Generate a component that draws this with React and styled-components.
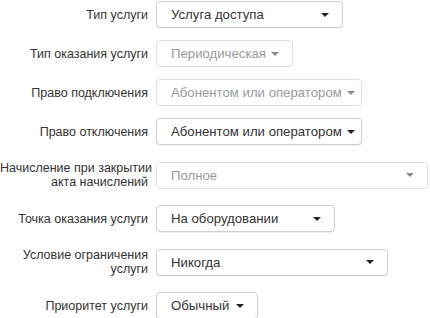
import React from 'react';
import styled, { createGlobalStyle } from 'styled-components';

const GlobalStyle = createGlobalStyle`
  body {
    margin: 0;
    background: #fff;
    font-family: "Liberation Sans", Arial, sans-serif;
    color: #333;
  }
`;

const rows = [
  { label: 'Тип услуги', value: 'Услуга доступа', width: 187, top: 1 },
  { label: 'Тип оказания услуги', value: 'Периодическая', width: 137, top: 12, disabled: true },
  { label: 'Право подключения', value: 'Абонентом или оператором', width: 206, top: 12, disabled: true },
  { label: 'Право отключения', value: 'Абонентом или оператором', width: 206, top: 12 },
  { label: ['Начисление при закрытии', 'акта начислений'], value: 'Полное', width: 272, top: 16, disabled: true },
  { label: 'Точка оказания услуги', value: 'На оборудовании', width: 179, top: 16 },
  { label: ['Условие ограничения', 'услуги'], value: 'Никогда', width: 232, top: 16 },
  { label: 'Приоритет услуги', value: 'Обычный', width: 102, top: 16 },
];

const Form = styled.div`
  display: flex;
  flex-direction: column;
`;

const Row = styled.div`
  display: flex;
  align-items: center;
  gap: 8px;
  margin-top: ${(p) => p.$top}px;
`;

const Label = styled.label`
  width: 148px;
  flex-shrink: 0;
  text-align: right;
  font-size: 12.5px;
  line-height: 14px;
  color: #333;
`;

const LabelLine = styled.div`
  white-space: nowrap;
`;

const Select = styled.div`
  box-sizing: border-box;
  width: ${(p) => p.$width}px;
  height: 27px;
  display: flex;
  align-items: center;
  justify-content: space-between;
  padding: 0 10px 0 14px;
  border: 1px solid ${(p) => (p.$disabled ? '#e0e0e0' : '#cfcfcf')};
  border-radius: 4px;
  background: #fff;
  font-size: 13.2px;
  white-space: nowrap;
  color: ${(p) => (p.$disabled ? '#9a9a9a' : '#333')};
  box-shadow: ${(p) => (p.$disabled ? 'none' : '0 1px 1px rgba(0,0,0,0.06)')};
`;

const Caret = styled.span`
  width: 0;
  height: 0;
  margin-left: 5px;
  margin-right: 3px;
  border-left: 4px solid transparent;
  border-right: 4px solid transparent;
  border-top: 4px solid ${(p) => (p.$disabled ? '#8a8a8a' : '#222')};
`;

export default function App() {
  return (
    <>
      <GlobalStyle />
      <Form>
        {rows.map((r, i) => (
          <Row key={i} $top={r.top}>
            <Label>
              {(Array.isArray(r.label) ? r.label : [r.label]).map((l, j) => (
                <LabelLine key={j}>{l}</LabelLine>
              ))}
            </Label>
            <Select $width={r.width} $disabled={r.disabled}>
              <span>{r.value}</span>
              <Caret $disabled={r.disabled} />
            </Select>
          </Row>
        ))}
      </Form>
    </>
  );
}
